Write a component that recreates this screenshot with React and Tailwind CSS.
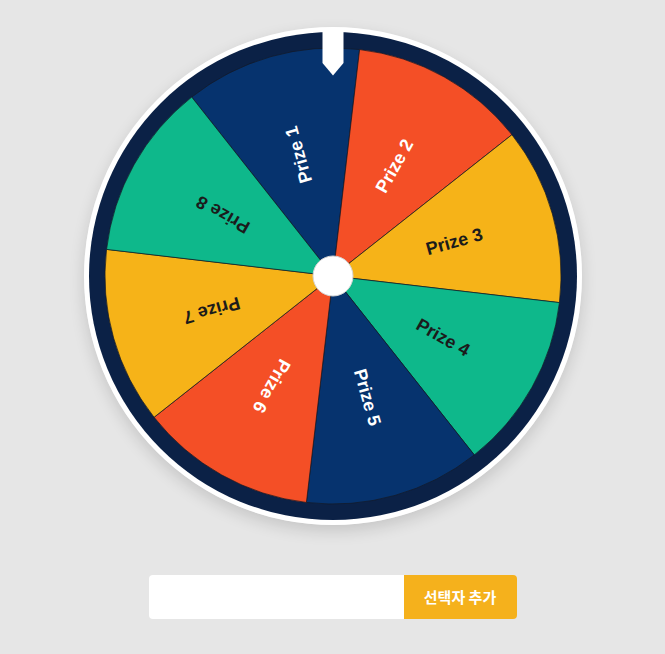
import { useState } from "react";

const PRIZES = [
  { label: "Prize 1", fill: "#06336e", text: "#ffffff" },
  { label: "Prize 2", fill: "#f44f26", text: "#ffffff" },
  { label: "Prize 3", fill: "#f6b318", text: "#1b1b1b" },
  { label: "Prize 4", fill: "#0eb88b", text: "#1b1b1b" },
  { label: "Prize 5", fill: "#06336e", text: "#ffffff" },
  { label: "Prize 6", fill: "#f44f26", text: "#ffffff" },
  { label: "Prize 7", fill: "#f6b318", text: "#1b1b1b" },
  { label: "Prize 8", fill: "#0eb88b", text: "#1b1b1b" },
];

const C = 249;
const R = 228;
const OFFSET = -38.3;

function point(deg, r) {
  const a = (deg * Math.PI) / 180;
  return [C + r * Math.sin(a), C - r * Math.cos(a)];
}

function Wheel() {
  const step = 360 / PRIZES.length;
  return (
    <div className="rounded-full shadow-[0_6px_16px_rgba(0,0,0,0.14)]">
      <svg width="498" height="498" viewBox="0 0 498 498" className="block">
        <circle cx={C} cy={C} r="249" fill="#ffffff" />
        <circle cx={C} cy={C} r="244" fill="#0b2146" />
        {PRIZES.map((p, i) => {
          const start = OFFSET + step * i;
          const end = start + step;
          const [x1, y1] = point(start, R);
          const [x2, y2] = point(end, R);
          return (
            <path
              key={p.label}
              d={`M${C} ${C} L${x1} ${y1} A${R} ${R} 0 0 1 ${x2} ${y2} Z`}
              fill={p.fill}
              stroke="rgba(20,24,36,0.7)"
              strokeWidth="1"
            />
          );
        })}
        {PRIZES.map((p, i) => {
          const mid = OFFSET + step * i + step / 2;
          return (
            <text
              key={p.label + "-t"}
              transform={`translate(${C} ${C}) rotate(${mid - 90}) translate(126 0)`}
              textAnchor="middle"
              dominantBaseline="central"
              fill={p.text}
              fontFamily="'Liberation Sans', Arial, Helvetica, sans-serif"
              fontSize="18"
              fontWeight="bold"
            >
              {p.label}
            </text>
          );
        })}
        <circle cx={C} cy={C} r="20" fill="#ffffff" stroke="#d4d4d4" strokeWidth="1" />
        <path d="M238.5 2 H259.5 V36 L249 48.5 L238.5 36 Z" fill="#ffffff" />
      </svg>
    </div>
  );
}

export default function App() {
  const [name, setName] = useState("");
  return (
    <div className="flex min-h-[654px] w-full flex-col items-center bg-[#e6e6e6] pt-[27px]">
      <Wheel />
      <div className="mt-[50px] flex h-[44px] w-[368px]">
        <input
          value={name}
          onChange={(e) => setName(e.target.value)}
          className="h-full flex-1 rounded-l-[4px] bg-white px-3 text-sm outline-none"
        />
        <button
          type="button"
          className="h-full w-[113px] rounded-r-[4px] bg-[#f5b11c] font-['Noto_Sans_CJK_KR',sans-serif] text-[15px] font-bold text-white"
        >
          선택자 추가
        </button>
      </div>
    </div>
  );
}
